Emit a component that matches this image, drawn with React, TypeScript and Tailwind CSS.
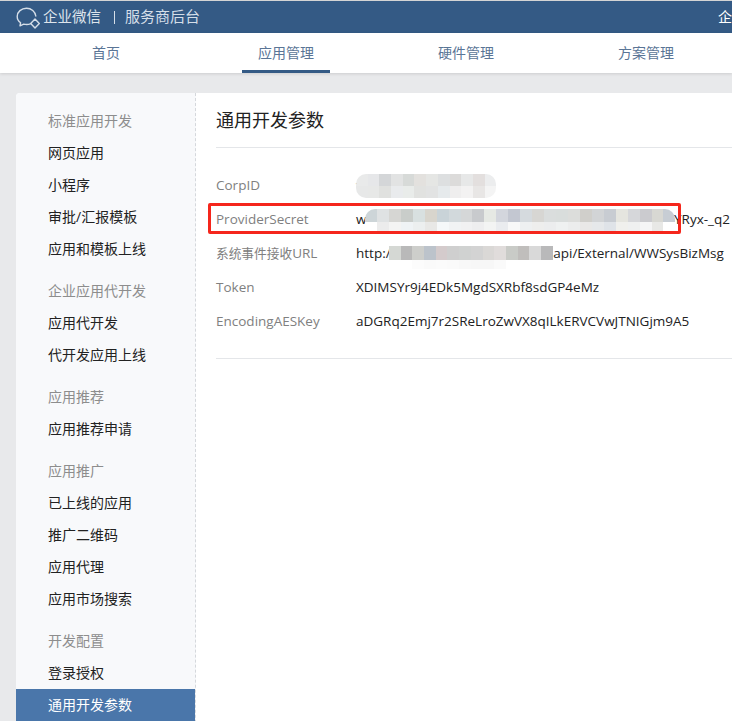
import { useState } from "react";

const tabs = ["首页", "应用管理", "硬件管理", "方案管理"];

const menu = [
  { title: "标准应用开发", items: ["网页应用", "小程序", "审批/汇报模板", "应用和模板上线"] },
  { title: "企业应用代开发", items: ["应用代开发", "代开发应用上线"] },
  { title: "应用推荐", items: ["应用推荐申请"] },
  { title: "应用推广", items: ["已上线的应用", "推广二维码", "应用代理", "应用市场搜索"] },
  { title: "开发配置", items: ["登录授权", "通用开发参数"] },
];

// the blurred-out parts of the secrets, rows of mosaic cells
const corpMosaic = [
  ["#e9eaea", "#e6e7e9", "#d4d6d8", "#e2e3e3", "#d7dad8", "#e3e1de", "#e5e6e4", "#dddfe0", "#dcdbda", "#e7e8e8", "#e3dfde", "#ecedee"],
  ["#e7e8e8", "#e7e8e7", "#e0e1df", "#e9ebed", "#e9ecea", "#e1e2e0", "#e2e3e3", "#e6eaec", "#efeeee", "#f3f2f2", "#e8e6e5", "#f4f4f4"],
];

const secretMosaic = [
  ["#cdd5d8", "#dfe2e3", "#d6d6d3", "#c9cdca", "#d8e0e0", "#d8d5cd", "#c9d3d8", "#d2d9dc", "#d5d7d8", "#c8cacd", "#e6e9e4", "#d3d6dd", "#c3c7d1", "#d5dade", "#d7d6d3", "#dadddd", "#d9dddc", "#dcdddb", "#d0cfcb", "#d2d4d6", "#c8ccd2", "#e5e5df", "#d6d7da", "#cbcbcf", "#d8d8d3", "#c7cdd4"],
  ["#ffffff", "#ececec", "#f4f4f3", "#eff3f5", "#ecefef", "#e8e8e6", "#f5f8f9", "#f1f3f4", "#f1f1f2", "#eeeeef", "#f3f4f3", "#eaecef", "#f8f8f8", "#eef0f1", "#eeeeed", "#ecedee", "#eff1f1", "#eceded", "#e9e8e7", "#e6e8ea", "#dfe3e8", "#f0f0ed", "#eff0f0", "#f5f5f6", "#e8e8e6", "#ffffff"],
];

const urlMosaic = [
  ["#d5d8d4", "#b9b9b9", "#cdcecb", "#bcc3cb", "#d4cbcc", "#cfcfcf", "#d0d2d1", "#d3d3d3", "#dad8d6", "#e0dcdb", "#c9cbc7", "#c0bebc", "#d9d9d9", "#b9b9ba"],
  ["#ffffff", "#ffffff", "#fcfcfc", "#fafafa", "#fbfbfb", "#fafafa", "#f8f8f8", "#f7f7f7", "#f7f7f7", "#fafafa", "#ffffff", "#ffffff", "#ffffff", "#ffffff"],
];

function Mosaic({ rows, cell, heights, round }: { rows: string[][]; cell: number; heights: number[]; round?: boolean }) {
  return (
    <div className={round ? "flex flex-col overflow-hidden rounded-[10px]" : "flex flex-col"}>
      {rows.map((row, i) => (
        <div key={i} className="flex">
          {row.map((color, j) => (
            <div key={j} style={{ width: cell, height: heights[i], background: color }} />
          ))}
        </div>
      ))}
    </div>
  );
}

function LogoIcon() {
  return (
    <svg width="24" height="23" viewBox="0 0 24 23" fill="none" stroke="#d5dee8" strokeWidth="1.4">
      <path
        d="M19.800 10C19.300 5.500 15.300 2.200 10.500 2.200C5.300 2.200 1.200 5.900 1.200 10.400C1.200 13 2.500 15.200 4.600 16.700L4 19.800L7.700 18.100C8.700 18.400 9.700 18.500 10.700 18.500C12 18.500 13.200 18.300 14.300 17.800"
        strokeLinecap="round"
        strokeLinejoin="round"
      />
      <path d="M19 13L23.300 17.500L19 22L14.700 17.500Z" strokeLinejoin="round" />
    </svg>
  );
}

function Row({ label, children }: { label: React.ReactNode; children: React.ReactNode }) {
  return (
    <div className="flex h-[34px] items-center text-[13.5px] leading-5">
      <div className="w-[140px] shrink-0 text-[#808080]">{label}</div>
      <div className="text-[#222222]">{children}</div>
    </div>
  );
}

export default function App() {
  const [activeTab] = useState(1);

  return (
    <div className="h-[721px] w-[732px] overflow-hidden bg-[#e8e9eb] font-['Open_Sans','Noto_Sans_CJK_SC',sans-serif] text-sm">
      <div className="h-px bg-[#d4d4d4]" />
      <header className="flex h-8 items-center justify-between bg-[#345a85] pl-4 text-white">
        <div className="flex items-center">
          <LogoIcon />
          <span className="ml-[3px] text-[14.5px] text-[#dfe5ec]">企业微信</span>
          <span className="mr-[10px] ml-[13px] h-[13px] w-px bg-[#d5dee8]" />
          <span className="text-[15px] text-[#d5dee8]">服务商后台</span>
        </div>
        <div className="w-[14px] overflow-hidden whitespace-nowrap">企业</div>
      </header>

      <nav className="flex h-10 bg-white pl-4 shadow-[0_1px_3px_rgba(0,0,0,0.12)]">
        {tabs.map((tab, i) => (
          <div key={tab} className="flex w-[180px] shrink-0 justify-center">
            <div
              className={
                i === activeTab
                  ? "flex h-10 items-center border-b-[3px] border-[#345a85] px-4 pt-[3px] text-[#5a7596]"
                  : "flex h-10 items-center px-4 text-[#5a7596]"
              }
            >
              {tab}
            </div>
          </div>
        ))}
      </nav>

      <div className="mt-5 ml-4 flex h-[700px] rounded-tl-[4px] bg-white">
        <aside className="w-[180px] shrink-0 rounded-tl-[4px] border-r border-dashed border-[#d5d8dc] bg-[#f8f9fb] pt-3">
          {menu.map((group) => (
            <div key={group.title} className="mb-[10px]">
              <div className="flex h-8 items-center pl-8 text-[#8d8d8d]">{group.title}</div>
              {group.items.map((item) => (
                <div
                  key={item}
                  className={
                    item === "通用开发参数"
                      ? "flex h-8 items-center bg-[#4a76aa] pl-8 text-white"
                      : "flex h-8 items-center pl-8 text-[#222222]"
                  }
                >
                  {item}
                </div>
              ))}
            </div>
          ))}
        </aside>

        <main className="relative min-w-0 flex-1 pl-5">
          <h1 className="flex h-[54px] items-center text-lg text-[#222222]">通用开发参数</h1>
          <div className="border-t border-[#e4e6e9] pt-5 pb-5">
            <Row label="CorpID">
              <span className="relative block whitespace-nowrap">
                w
                <span className="absolute top-[-1px] left-0">
                  <Mosaic rows={corpMosaic} cell={11.7} heights={[12, 12]} round />
                </span>
              </span>
            </Row>
            <Row label="ProviderSecret">
              <span className="relative block whitespace-nowrap pl-[318px]">
                <span className="absolute top-0 left-0">w.</span>
                YRyx-_q2
                <span className="absolute top-0 left-[9px]">
                  <Mosaic rows={secretMosaic} cell={11.95} heights={[13, 10]} round />
                </span>
              </span>
            </Row>
            <Row
              label={
                <>
                  <span className="text-[12.7px]">系统事件接收</span>URL
                </>
              }
            >
              <span className="relative block whitespace-nowrap">
                http:/.<span className="inline-block w-[159px]" />api/External/WWSysBizMsg
                <span className="absolute top-[3px] left-[33px]">
                  <Mosaic rows={urlMosaic} cell={11.7} heights={[14, 9]} />
                </span>
              </span>
            </Row>
            <Row label="Token">XDIMSYr9j4EDk5MgdSXRbf8sdGP4eMz</Row>
            <Row label="EncodingAESKey">aDGRq2Emj7r2SReLroZwVX8qILkERVCVwJTNIGjm9A5</Row>
          </div>
          <div className="border-t border-[#e4e6e9]" />
          <div className="absolute top-[110px] left-[12px] h-[31px] w-[473px] rounded-[2px] border-[3px] border-[#f5261c]" />
        </main>
      </div>
    </div>
  );
}
